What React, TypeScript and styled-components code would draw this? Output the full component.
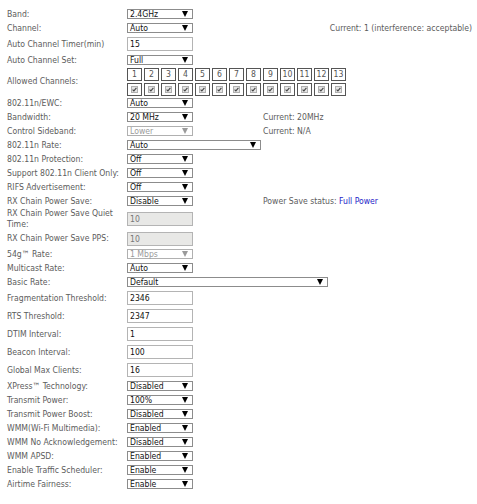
import React from "react";
import styled, { createGlobalStyle } from "styled-components";

const GlobalStyle = createGlobalStyle`
  html, body {
    margin: 0;
    padding: 0;
    background: #fff;
  }
  body {
    font-family: "DejaVu Sans Condensed", "Liberation Sans", sans-serif;
    font-size: 8.6px;
    color: #5c5c5c;
  }
`;

// LAYOUT
const Page = styled.div`
  width: 477px;
  box-sizing: border-box;
  padding: 7px 0 0 7px;
  display: flex;
  flex-direction: column;
`;

const Row = styled.div<{ $h: number }>`
  display: flex;
  align-items: center;
  height: ${(p) => p.$h}px;
`;

const Label = styled.div`
  flex: 0 0 120px;
  line-height: 11px;
  white-space: nowrap;
`;

const Control = styled.div`
  flex: 0 0 136px;
  display: flex;
  align-items: center;
`;

const Note = styled.div<{ $right?: boolean }>`
  flex: 1;
  padding-right: 5px;
  text-align: ${(p) => (p.$right ? "right" : "left")};
  white-space: nowrap;
`;

const Highlight = styled.span`
  color: #2424c8;
`;

// FORM PARTS
const SelectBox = styled.div<{ $w?: number; $disabled?: boolean }>`
  position: relative;
  flex-shrink: 0;
  box-sizing: border-box;
  width: ${(p) => p.$w ?? 66}px;
  height: 10px;
  padding-left: 2px;
  border: 1px solid ${(p) => (p.$disabled ? "#b0b0b0" : "#8c8c8c")};
  background: #fff;
  color: ${(p) => (p.$disabled ? "#9a9a9a" : "#111")};
  line-height: 8px;
  white-space: nowrap;

  &::after {
    content: "";
    position: absolute;
    right: 4px;
    top: 1px;
    border-left: 3.5px solid transparent;
    border-right: 3.5px solid transparent;
    border-top: 6px solid ${(p) => (p.$disabled ? "#9a9a9a" : "#000")};
  }
`;

const TextInput = styled.input<{ $disabled?: boolean }>`
  box-sizing: border-box;
  width: 66px;
  height: 14px;
  margin: 0;
  padding: 0 2px;
  border: 1px solid #b4b4b4;
  background: ${(p) => (p.$disabled ? "#e8e8e6" : "#fff")};
  color: ${(p) => (p.$disabled ? "#777" : "#111")};
  font: inherit;
  outline: none;
`;

const ChannelGrid = styled.div`
  display: grid;
  grid-template-columns: repeat(13, 15px);
  grid-template-rows: 13px 13px;
  gap: 2px 2px;
`;

const ChannelCell = styled.div`
  box-sizing: border-box;
  border: 1px solid #555;
  display: flex;
  align-items: center;
  justify-content: center;
  color: #555;
`;

const Check = () => (
  <svg width="7" height="7" viewBox="0 0 7 7">
    <rect x="0.5" y="0.5" width="6" height="6" fill="#e4e4e4" stroke="#b0b0b0" />
    <path d="M1.6 3.6 L2.9 4.9 L5.4 1.9" fill="none" stroke="#444" strokeWidth="1.1" />
  </svg>
);

// DATA
type Kind = "select" | "input" | "channels";

interface Field {
  label: React.ReactNode;
  h: number;
  kind: Kind;
  value?: string;
  w?: number;
  disabled?: boolean;
  note?: React.ReactNode;
  noteRight?: boolean;
}

const fields: Field[] = [
  { label: "Band:", h: 14, kind: "select", value: "2.4GHz" },
  { label: "Channel:", h: 14, kind: "select", value: "Auto", note: "Current: 1 (interference: acceptable)", noteRight: true },
  { label: "Auto Channel Timer(min)", h: 18, kind: "input", value: "15" },
  { label: "Auto Channel Set:", h: 14, kind: "select", value: "Full" },
  { label: "Allowed Channels:", h: 29, kind: "channels" },
  { label: "802.11n/EWC:", h: 14, kind: "select", value: "Auto" },
  { label: "Bandwidth:", h: 14, kind: "select", value: "20 MHz", note: "Current: 20MHz" },
  { label: "Control Sideband:", h: 14, kind: "select", value: "Lower", disabled: true, note: "Current: N/A" },
  { label: "802.11n Rate:", h: 14, kind: "select", value: "Auto", w: 134 },
  { label: "802.11n Protection:", h: 14, kind: "select", value: "Off" },
  { label: "Support 802.11n Client Only:", h: 14, kind: "select", value: "Off" },
  { label: "RIFS Advertisement:", h: 14, kind: "select", value: "Off" },
  {
    label: "RX Chain Power Save:",
    h: 14,
    kind: "select",
    value: "Disable",
    note: (
      <>
        Power Save status: <Highlight>Full Power</Highlight>
      </>
    ),
  },
  {
    label: (
      <>
        RX Chain Power Save Quiet
        <br />
        Time:
      </>
    ),
    h: 22,
    kind: "input",
    value: "10",
    disabled: true,
  },
  { label: "RX Chain Power Save PPS:", h: 17, kind: "input", value: "10", disabled: true },
  { label: "54g\u2122 Rate:", h: 14, kind: "select", value: "1 Mbps", disabled: true },
  { label: "Multicast Rate:", h: 14, kind: "select", value: "Auto" },
  { label: "Basic Rate:", h: 14, kind: "select", value: "Default", w: 201 },
  { label: "Fragmentation Threshold:", h: 18, kind: "input", value: "2346" },
  { label: "RTS Threshold:", h: 18, kind: "input", value: "2347" },
  { label: "DTIM Interval:", h: 18, kind: "input", value: "1" },
  { label: "Beacon Interval:", h: 18, kind: "input", value: "100" },
  { label: "Global Max Clients:", h: 18, kind: "input", value: "16" },
  { label: "XPress\u2122 Technology:", h: 14, kind: "select", value: "Disabled" },
  { label: "Transmit Power:", h: 14, kind: "select", value: "100%" },
  { label: "Transmit Power Boost:", h: 14, kind: "select", value: "Disabled" },
  { label: "WMM(Wi-Fi Multimedia):", h: 14, kind: "select", value: "Enabled" },
  { label: "WMM No Acknowledgement:", h: 14, kind: "select", value: "Disabled" },
  { label: "WMM APSD:", h: 14, kind: "select", value: "Enabled" },
  { label: "Enable Traffic Scheduler:", h: 14, kind: "select", value: "Enable" },
  { label: "Airtime Fairness:", h: 14, kind: "select", value: "Enable" },
];

const channels = Array.from({ length: 13 }, (_, i) => i + 1);

function renderControl(f: Field) {
  if (f.kind === "select") {
    return (
      <SelectBox $w={f.w} $disabled={f.disabled}>
        {f.value}
      </SelectBox>
    );
  }
  if (f.kind === "input") {
    return <TextInput $disabled={f.disabled} disabled={f.disabled} readOnly value={f.value} />;
  }
  return (
    <ChannelGrid>
      {channels.map((c) => (
        <ChannelCell key={"n" + c}>{c}</ChannelCell>
      ))}
      {channels.map((c) => (
        <ChannelCell key={"c" + c}>
          <Check />
        </ChannelCell>
      ))}
    </ChannelGrid>
  );
}

export default function App() {
  return (
    <>
      <GlobalStyle />
      <Page>
        {fields.map((f, i) => (
          <Row key={i} $h={f.h}>
            <Label>{f.label}</Label>
            <Control>{renderControl(f)}</Control>
            {f.note && <Note $right={f.noteRight}>{f.note}</Note>}
          </Row>
        ))}
      </Page>
    </>
  );
}
